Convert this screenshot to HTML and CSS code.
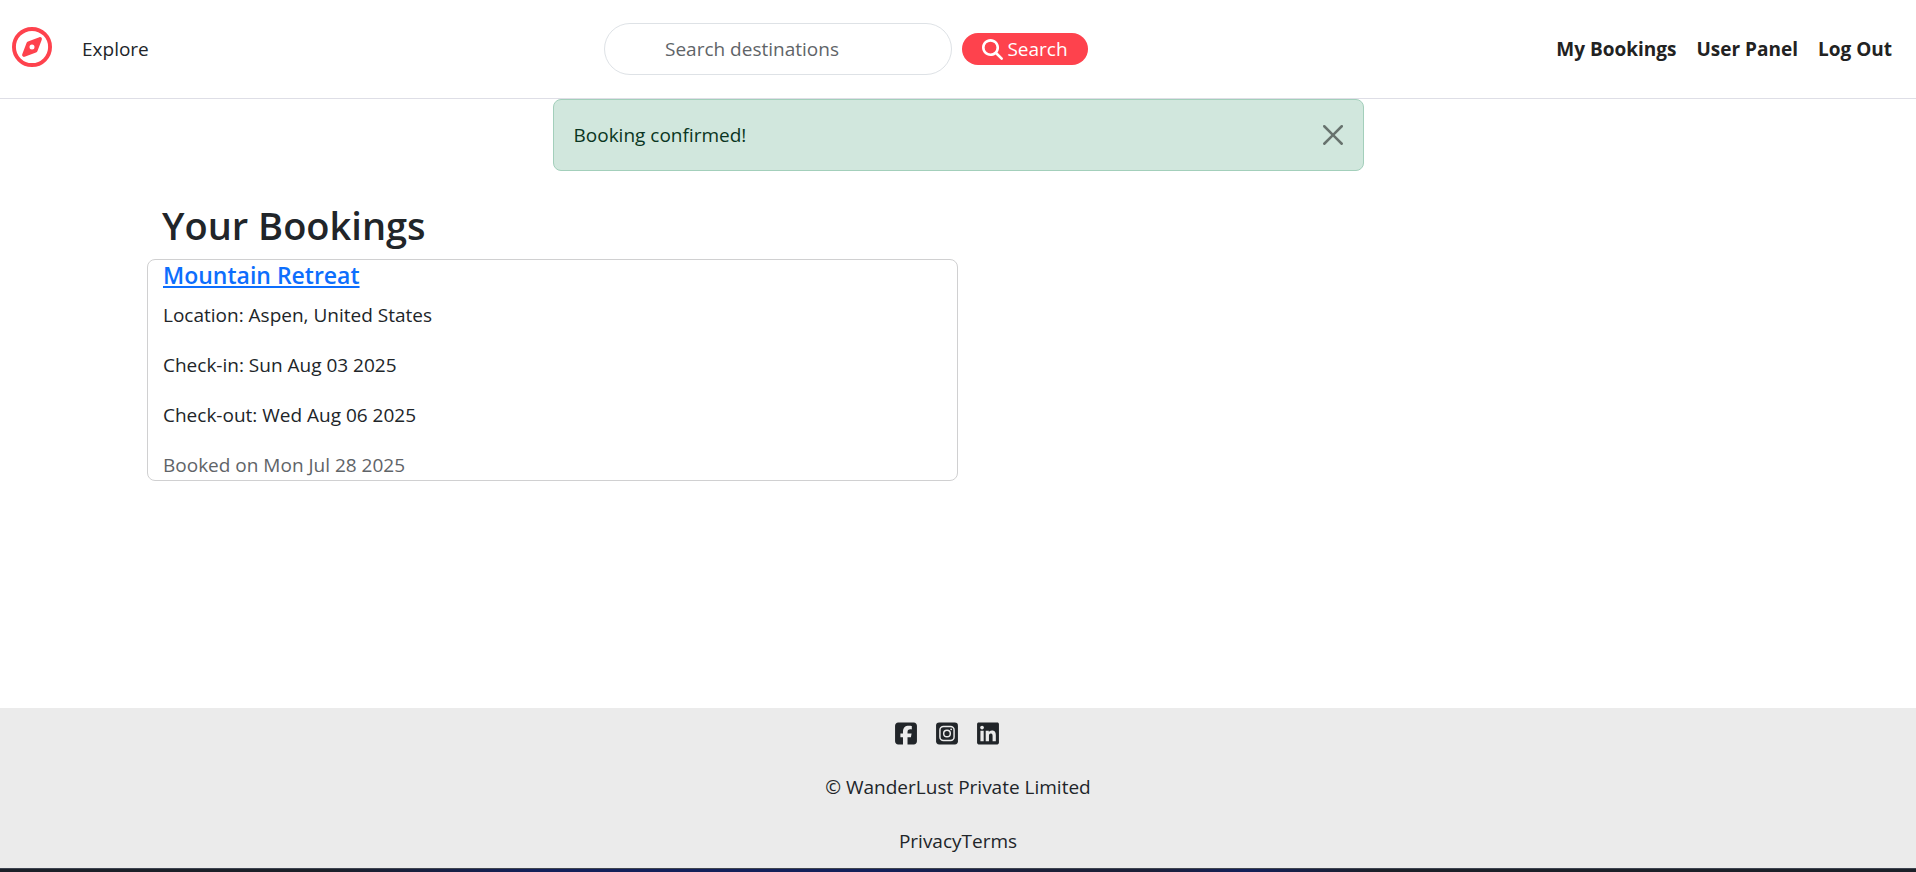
FILE: index.html
```html
<!DOCTYPE html>
<html lang="en">
<head>
<meta charset="utf-8">
<meta name="viewport" content="width=device-width, initial-scale=1">
<title>WanderLust</title>
<link rel="stylesheet" href="styles.css">
</head>
<body>
<header class="navbar">
  <div class="nav-start">
    <a class="brand" href="#" aria-label="WanderLust home">
      <svg viewBox="0 0 512 512" aria-hidden="true"><circle cx="256" cy="256" r="231" fill="none" stroke="currentColor" stroke-width="50"/><path fill-rule="evenodd" d="M307 326 162 381c-20 8-39-11-31-31l55-145a32 32 0 0 1 19-19l145-55c20-8 39 11 31 31l-55 145a32 32 0 0 1-19 19zM288 256a32 32 0 1 0-64 0 32 32 0 1 0 64 0z"/></svg>
    </a>
    <a class="nav-link" href="#">Explore</a>
  </div>
  <form class="search" role="search">
    <input class="search-input" type="search" placeholder="Search destinations" aria-label="Search destinations">
    <button class="search-button" type="submit">
      <svg viewBox="0 0 512 512" aria-hidden="true"><path d="M416 208c0 45.900-14.900 88.300-40 122.700L502.600 457.400c12.500 12.500 12.500 32.800 0 45.300s-32.800 12.500-45.300 0L330.700 376c-34.400 25.200-76.800 40-122.700 40C93.100 416 0 322.900 0 208S93.100 0 208 0S416 93.100 416 208zM208 352a144 144 0 1 0 0-288 144 144 0 1 0 0 288z"/></svg>
      Search
    </button>
  </form>
  <nav class="nav-end" aria-label="Account">
    <a href="#">My Bookings</a>
    <a href="#">User Panel</a>
    <a href="#">Log Out</a>
  </nav>
</header>

<main class="container">
  <div class="alert" role="alert">
    <span>Booking confirmed!</span>
    <button class="alert-close" type="button" aria-label="Close">
      <svg viewBox="0 0 16 16" aria-hidden="true"><path d="M.293.293a1 1 0 0 1 1.414 0L8 6.586 14.293.293a1 1 0 1 1 1.414 1.414L9.414 8l6.293 6.293a1 1 0 0 1-1.414 1.414L8 9.414l-6.293 6.293a1 1 0 0 1-1.414-1.414L6.586 8 .293 1.707a1 1 0 0 1 0-1.414z"/></svg>
    </button>
  </div>
  <h1 class="page-title">Your Bookings</h1>
  <article class="card">
    <h2 class="card-title"><a href="#">Mountain Retreat</a></h2>
    <p>Location: Aspen, United States</p>
    <p>Check-in: Sun Aug 03 2025</p>
    <p>Check-out: Wed Aug 06 2025</p>
    <p class="muted">Booked on Mon Jul 28 2025</p>
  </article>
</main>

<footer class="footer">
  <div class="socials">
    <a href="#" aria-label="Facebook"><svg viewBox="0 0 448 512" aria-hidden="true"><path d="M64 32C28.700 32 0 60.700 0 96v320c0 35.300 28.700 64 64 64h98.200V334.200h-52.800V256h52.800v-33.700c0-87.100 39.400-127.500 125-127.500 16.200 0 44.200 3.200 55.700 6.400V172c-6-.6-16.500-1-29.600-1-42 0-58.200 15.900-58.200 57.200V256h83.600l-14.400 78.200h-69.300V480H384c35.300 0 64-28.700 64-64V96c0-35.300-28.700-64-64-64H64z"/></svg></a>
    <a href="#" aria-label="Instagram"><svg viewBox="0 0 448 512" aria-hidden="true"><rect y="32" width="448" height="448" rx="64"/><g class="icon-lines"><rect x="79" y="111" width="290" height="290" rx="72"/><circle cx="224" cy="256" r="68"/></g><circle class="icon-dot" cx="309" cy="171" r="19"/></svg></a>
    <a href="#" aria-label="LinkedIn"><svg viewBox="0 0 448 512" aria-hidden="true"><path d="M416 32H31.900C14.300 32 0 46.500 0 64.300v383.400C0 465.500 14.300 480 31.900 480H416c17.600 0 32-14.500 32-32.300V64.300c0-17.800-14.400-32.300-32-32.300zM135.400 416H69V202.200h66.500V416zm-33.200-243c-21.300 0-38.500-17.300-38.500-38.500S80.900 96 102.200 96c21.200 0 38.500 17.300 38.500 38.500 0 21.300-17.200 38.500-38.500 38.500zm282.100 243h-66.400V312c0-24.800-.5-56.700-34.500-56.700-34.600 0-39.900 27-39.900 54.900V416h-66.400V202.200h63.700v29.200h.9c8.900-16.800 30.600-34.500 62.900-34.500 67.200 0 79.700 44.300 79.700 101.900V416z"/></svg></a>
  </div>
  <p>© WanderLust Private Limited</p>
  <div class="legal"><a href="#">Privacy</a><a href="#">Terms</a></div>
</footer>
<div class="bottom-strip"></div>
</body>
</html>
```
FILE: styles.css
```css
* {
  box-sizing: border-box;
}

body {
  margin: 0;
  min-height: 100vh;
  display: flex;
  flex-direction: column;
  background: #fff;
  color: #212529;
  font-family: "Segoe UI", "Open Sans", "Noto Sans", sans-serif;
  font-size: 19px;
  line-height: 30px;
}

h1, h2, p {
  margin: 0;
}

a {
  color: inherit;
  text-decoration: none;
}

svg {
  display: block;
  fill: currentColor;
}

.navbar {
  display: grid;
  grid-template-columns: 604px 1fr auto;
  align-items: center;
  min-height: 99px;
  padding-right: 24px;
  border-bottom: 1px solid #dedee6;
}

.nav-start {
  display: flex;
  align-items: center;
  gap: 30px;
  padding-left: 12px;
}

.brand {
  padding-bottom: 4px;
  color: #fe424d;
}

.brand svg {
  width: 40px;
  height: 40px;
}

.search {
  display: flex;
  align-items: center;
  gap: 10px;
}

.search-input {
  width: 348px;
  height: 52px;
  padding: 0 60px;
  border: 1px solid #dee2e6;
  border-radius: 26px;
  background: #fff;
  color: #212529;
  font: inherit;
}

.search-input::placeholder {
  color: #5f6468;
  opacity: 1;
}

.search-button {
  display: flex;
  align-items: center;
  justify-content: center;
  gap: 4px;
  width: 126px;
  height: 32px;
  padding: 0;
  border: 0;
  border-radius: 16px;
  background: #fe424d;
  color: #fff;
  font: inherit;
}

.search-button svg {
  width: 21px;
  height: 21px;
}

.nav-end {
  display: flex;
  gap: 20px;
  color: #222;
  font-weight: 700;
}

.container {
  flex: 1;
  width: 100%;
  max-width: 1652px;
  margin: 0 auto;
  padding: 0 15px;
}

.alert {
  display: flex;
  align-items: center;
  justify-content: space-between;
  width: 50%;
  min-height: 72px;
  margin: 0 auto 30px;
  padding: 20px;
  border: 1px solid #a3cfbb;
  border-radius: 8px;
  background: #d1e7dd;
  color: #0a3622;
}

.alert-close {
  padding: 0;
  border: 0;
  background: none;
  color: #000;
  opacity: 0.5;
}

.alert-close svg {
  width: 20px;
  height: 20px;
}

.page-title {
  margin-bottom: 10px;
  padding-left: 15px;
  font-size: 38px;
  font-weight: 600;
  line-height: 48px;
}

.card {
  display: flex;
  flex-direction: column;
  gap: 20px;
  width: 50%;
  padding: 0 15px;
  border: 1px solid #d0d0d1;
  border-radius: 8px;
}

.card-title {
  margin-bottom: -10px;
  font-size: 23px;
  font-weight: 600;
}

.card-title a {
  color: #0d6efd;
  text-decoration: underline;
}

.muted {
  color: #5f6468;
}

.footer {
  display: flex;
  flex-direction: column;
  align-items: center;
  gap: 24px;
  padding: 10px 0 12px;
  background: #ebebeb;
}

.socials {
  display: flex;
  align-items: center;
  gap: 19px;
  height: 30px;
  padding-right: 22px;
}

.socials svg {
  width: 22px;
  height: 25px;
}

.icon-lines {
  fill: none;
  stroke: #ebebeb;
  stroke-width: 30;
}

.icon-dot {
  fill: #ebebeb;
}

.bottom-strip {
  height: 4px;
  border-top: 1px solid #3f4450;
  background: linear-gradient(90deg, #1b2028 0%, #1b2028 17%, #12205a 28%, #12205a 46%, #1b2038 54%, #1b2038 60%, #12205a 65%, #1b2028 72%, #1b2028 100%);
}
```
